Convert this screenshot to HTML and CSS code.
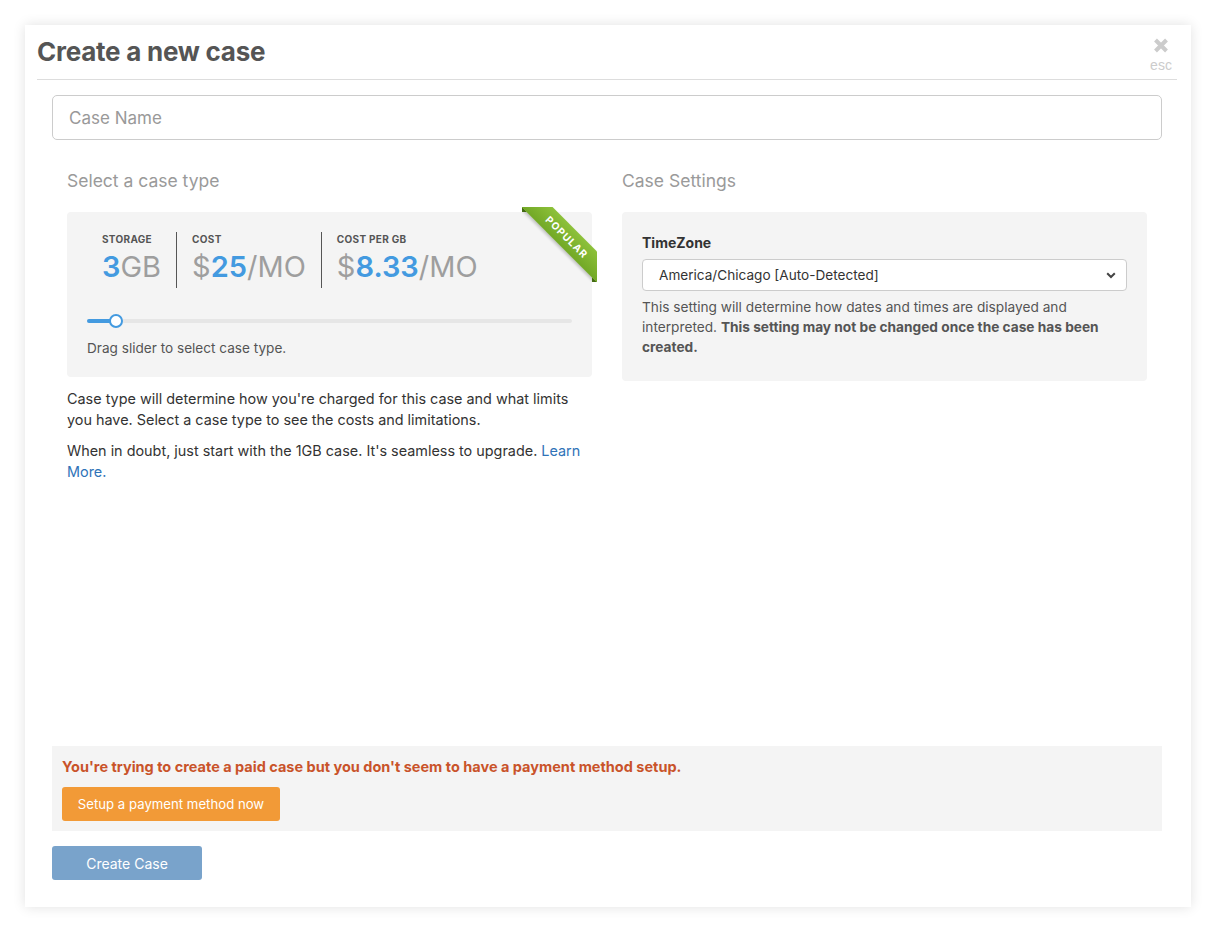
FILE: index.html
```html
<!DOCTYPE html>
<html lang="en">
<head>
<meta charset="utf-8">
<title>Create a new case</title>
<link rel="stylesheet" href="styles.css">
</head>
<body>
<div class="modal">
  <div class="modal-header">
    <h1 class="modal-title">Create a new case</h1>
    <div class="close">
      <svg class="close-x" width="16" height="15" viewBox="0 0 16 15"><path d="M2.5 2 L13.5 13 M13.5 2 L2.5 13" stroke="#cccccc" stroke-width="4" stroke-linecap="butt"/></svg>
      <span class="close-esc">esc</span>
    </div>
  </div>
  <div class="modal-body">
    <input class="case-name" type="text" placeholder="Case Name">
    <div class="row">
      <div class="col">
        <h3 class="section-title">Select a case type</h3>
        <div class="panel type-panel">
          <div class="ribbon"><span>POPULAR</span></div>
          <div class="stats">
            <div class="stat">
              <div class="stat-label">STORAGE</div>
              <div class="stat-value"><b>3</b>GB</div>
            </div>
            <div class="stat">
              <div class="stat-label">COST</div>
              <div class="stat-value">$<b>25</b>/MO</div>
            </div>
            <div class="stat last">
              <div class="stat-label">COST PER GB</div>
              <div class="stat-value">$<b>8.33</b>/MO</div>
            </div>
          </div>
          <div class="slider">
            <div class="track"></div>
            <div class="fill"></div>
            <div class="handle"></div>
          </div>
          <div class="hint">Drag slider to select case type.</div>
        </div>
        <p class="copy">Case type will determine how you're charged for this case and what limits you have. Select a case type to see the costs and limitations.</p>
        <p class="copy">When in doubt, just start with the 1GB case. It's seamless to upgrade. <a href="#">Learn More.</a></p>
      </div>
      <div class="col">
        <h3 class="section-title">Case Settings</h3>
        <div class="panel settings-panel">
          <label class="field-label">TimeZone</label>
          <div class="select">
            <span>America/Chicago [Auto-Detected]</span>
            <svg class="chev" width="10" height="7" viewBox="0 0 10 7"><path d="M1.2 1.2 L5 5 L8.8 1.2" fill="none" stroke="#444" stroke-width="2"/></svg>
          </div>
          <p class="help">This setting will determine how dates and times are displayed and interpreted. <strong>This setting may not be changed once the case has been created.</strong></p>
        </div>
      </div>
    </div>
    <div class="warning">
      <div class="warning-text">You're trying to create a paid case but you don't seem to have a payment method setup.</div>
      <button class="btn btn-orange">Setup a payment method now</button>
    </div>
    <button class="btn btn-create">Create Case</button>
  </div>
</div>
</body>
</html>
```
FILE: styles.css
```css
* { box-sizing: border-box; }
html, body { margin: 0; padding: 0; background: #fff; }
body {
  padding: 25px;
  font-family: Inter, "Liberation Sans", Arial, sans-serif;
  color: #333;
  font-size: 14px;
}
.modal {
  width: 1166px;
  height: 882px;
  background: #fff;
  box-shadow: 0 0 12px rgba(0,0,0,0.12);
  display: flex;
  flex-direction: column;
}
.modal-header {
  margin: 0 14px 0 12px;
  border-bottom: 1px solid #dddddd;
  display: flex;
  justify-content: space-between;
  align-items: flex-start;
  height: 55px;
}
.modal-title {
  margin: 11px 0 0 0;
  font-size: 26px;
  line-height: 32px;
  font-weight: 700;
  color: #555;
  letter-spacing: -0.25px;
}
.close {
  display: flex;
  flex-direction: column;
  align-items: center;
  padding-top: 13px;
  width: 28px;
  margin-right: 2px;
}
.close-x { display: block; }
.close-esc {
  font-family: "Liberation Sans", Arial, sans-serif;
  color: #cccccc;
  font-size: 14px;
  line-height: 16px;
  margin-top: 4px;
}
.modal-body {
  flex: 1;
  display: flex;
  flex-direction: column;
  padding: 15px 29px 27px 27px;
}
.case-name {
  width: 100%;
  height: 45px;
  border: 1px solid #cccccc;
  border-radius: 5px;
  padding: 0 16px;
  font-family: Inter, "Liberation Sans", Arial, sans-serif;
  font-size: 17px;
  color: #333;
  outline: none;
}
.case-name::placeholder { color: #999; }
.row {
  flex: 1;
  display: flex;
}
.col {
  width: 50%;
  padding: 0 15px;
}
.section-title {
  margin: 31px 0 21px;
  font-size: 17.5px;
  line-height: 20px;
  font-weight: 400;
  color: #9a9a9a;
}
.panel {
  background: #f4f4f4;
  border-radius: 4px;
  padding: 20px;
}
.type-panel {
  position: relative;
  height: 165px;
}
.stats {
  display: flex;
}
.stat {
  padding: 0 15px;
  border-right: 1px solid #555;
  height: 56px;
}
.stat.last { border-right: none; }
.stat-label {
  font-size: 10px;
  line-height: 14px;
  font-weight: 700;
  color: #555;
  letter-spacing: 0.3px;
}
.stat-value {
  font-size: 29px;
  line-height: 42px;
  color: #9e9e9e;
  white-space: nowrap;
}
.stat-value b {
  color: #439ae0;
  font-weight: 600;
}
.slider {
  position: relative;
  height: 16px;
  margin-top: 25px;
}
.track {
  position: absolute;
  left: 0; right: 0; top: 6px;
  height: 4px;
  border-radius: 2px;
  background: #e6e6e6;
}
.fill {
  position: absolute;
  left: 0; top: 6px;
  width: 26px;
  height: 4px;
  border-radius: 2px;
  background: #439ae0;
}
.handle {
  position: absolute;
  left: 22px; top: 1px;
  width: 14px; height: 14px;
  border-radius: 50%;
  background: #fff;
  border: 2px solid #439ae0;
}
.hint {
  margin-top: 10px;
  font-size: 13.6px;
  line-height: 18px;
  color: #555;
}
.ribbon {
  position: absolute;
  top: -5px;
  right: -5px;
  width: 75px;
  height: 75px;
  overflow: hidden;
}
.ribbon::before, .ribbon::after {
  content: "";
  position: absolute;
  width: 0; height: 0;
  z-index: 0;
}
.ribbon::before { top: 0; left: 0; border-bottom: 5px solid #4e7a17; border-right: 5px solid transparent; }
.ribbon::after { bottom: 0; right: 0; border-left: 5px solid #4e7a17; border-top: 5px solid transparent; }
.ribbon span {
  position: absolute;
  left: -10px;
  top: 19px;
  width: 110px;
  height: 22px;
  transform: rotate(45deg);
  background: linear-gradient(#8dc13a, #72a826);
  color: #fff;
  font-size: 10px;
  font-weight: 700;
  line-height: 22px;
  text-align: center;
  letter-spacing: 1px;
  box-shadow: 0 2px 3px rgba(0,0,0,0.2);
  z-index: 1;
}
.copy {
  margin: 11px 0 0;
  font-size: 14.4px;
  line-height: 21px;
  color: #333;
}
.copy + .copy { margin-top: 10px; }
.copy a { color: #2f73b8; text-decoration: none; }
.settings-panel {
  padding: 20px 20px 24px;
  height: 169px;
}
.field-label {
  display: block;
  font-size: 14px;
  line-height: 22px;
  font-weight: 700;
  color: #333;
  margin-bottom: 5px;
}
.select {
  height: 32px;
  background: #fff;
  border: 1px solid #cccccc;
  border-radius: 4px;
  display: flex;
  align-items: center;
  justify-content: space-between;
  padding: 0 10px 0 16px;
  font-size: 13.6px;
  color: #333;
}
.chev { display: block; }
.help {
  margin: 6px 0 0;
  font-size: 13.7px;
  line-height: 20px;
  color: #555;
}
.help strong { color: #555; font-weight: 700; }
.warning {
  background: #f4f4f4;
  padding: 11px 10px 10px;
}
.warning-text {
  font-size: 14.5px;
  line-height: 20px;
  font-weight: 700;
  color: #c9532a;
  margin-bottom: 10px;
}
.btn {
  display: block;
  border: 0;
  border-radius: 3px;
  color: #fff;
  font-family: Inter, "Liberation Sans", Arial, sans-serif;
  font-size: 14px;
  height: 34px;
  padding: 0;
  white-space: nowrap;
  text-align: center;
  cursor: pointer;
}
.btn-orange {
  background: #f29a37;
  width: 218px;
  font-size: 13.2px;
}
.btn-create {
  margin-top: 15px;
  width: 150px;
  background: #79a3cb;
}
```
